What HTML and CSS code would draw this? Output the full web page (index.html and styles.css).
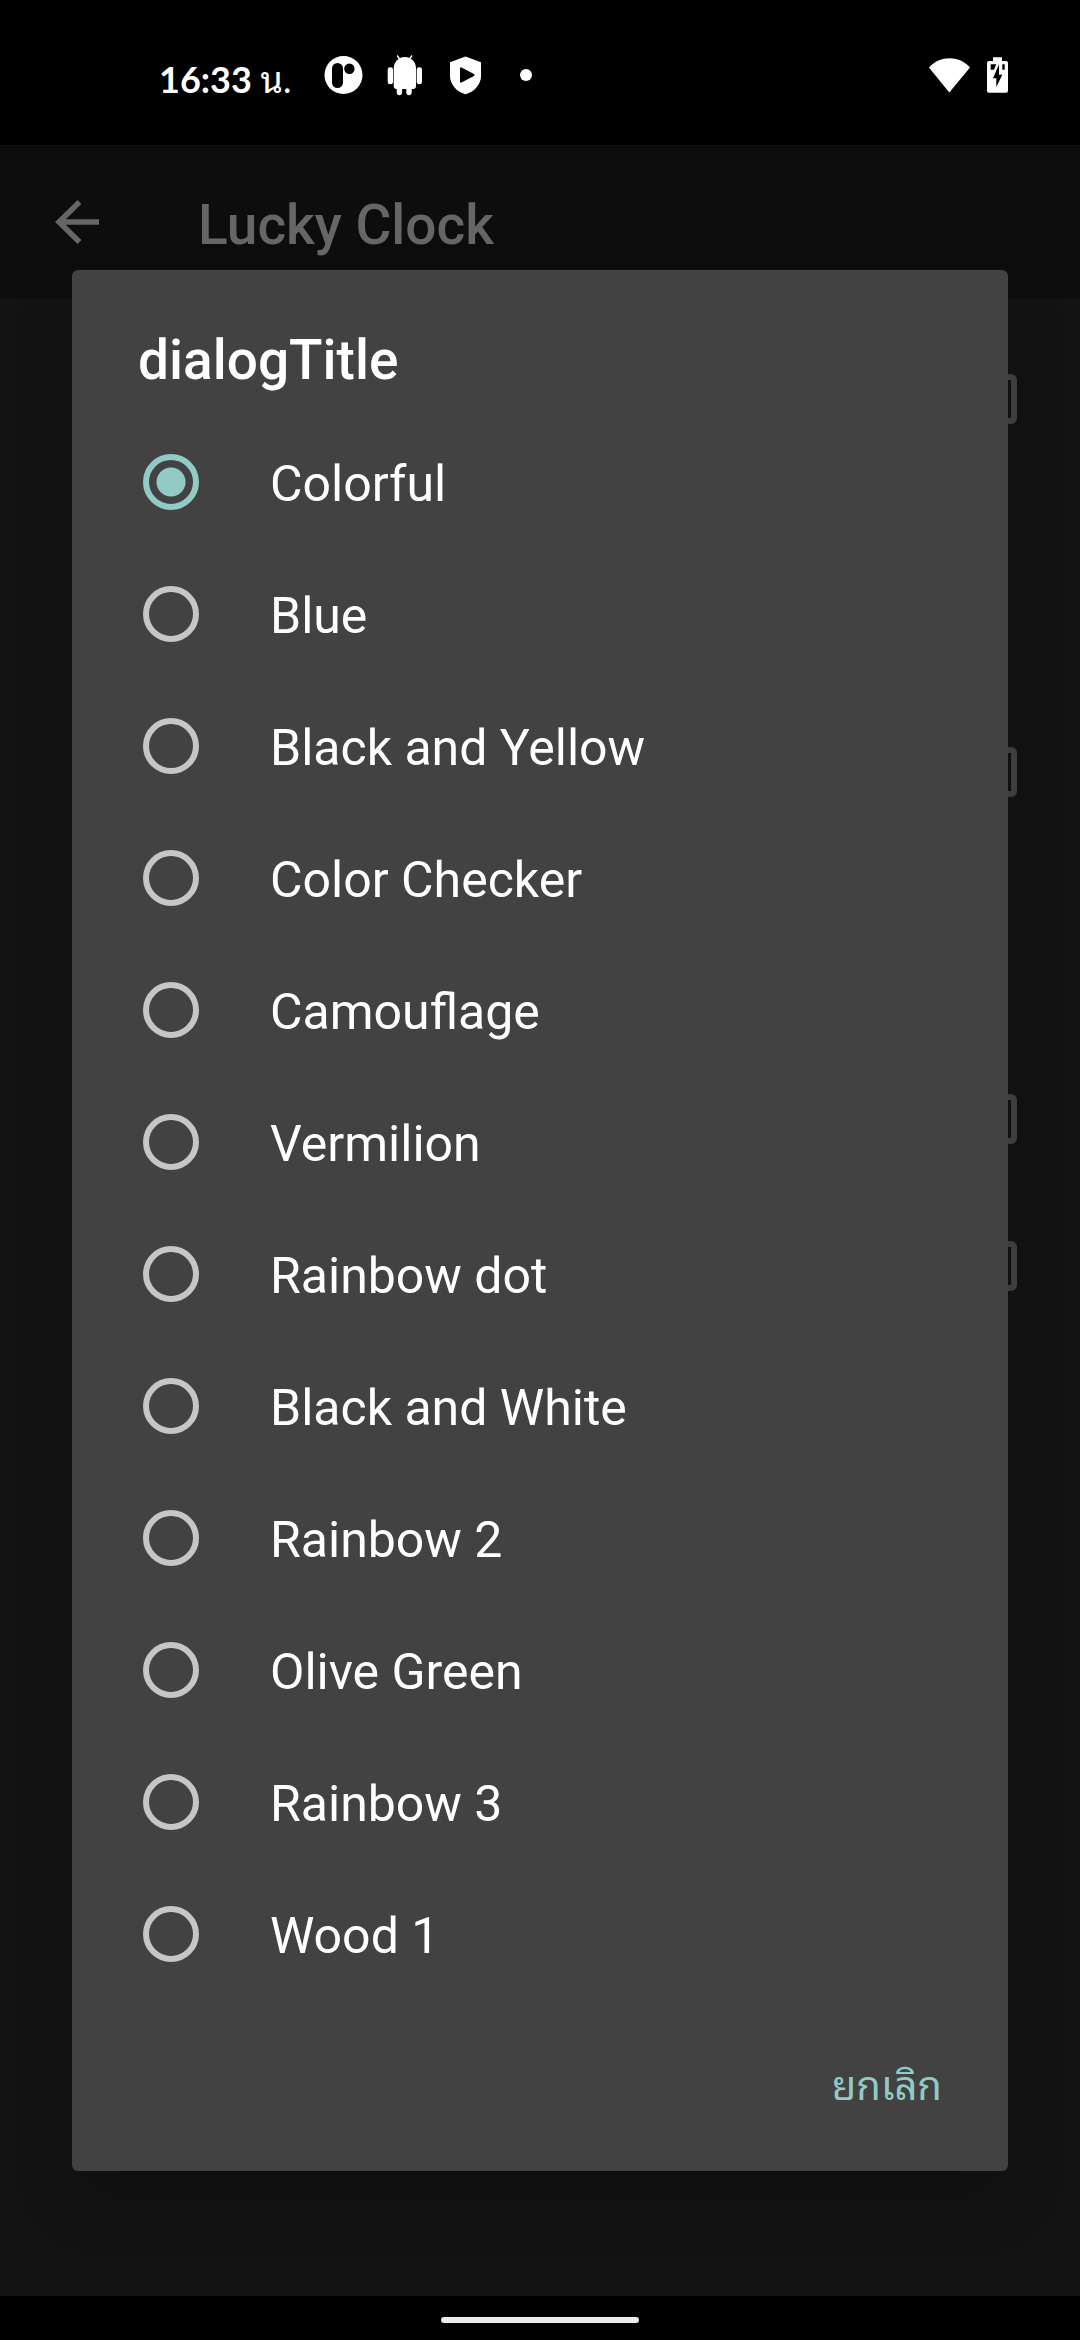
FILE: index.html
```html
<!DOCTYPE html>
<html lang="th">
<head>
    <meta charset="UTF-8">
    <title>Lucky Clock</title>
    <meta name="viewport" content="width=device-width, initial-scale=1.0">
    <link rel="stylesheet" href="styles.css">
</head>
<body>
    <!-- status bar -->
    <div class="status-bar">
        <div class="time">16:33 <span>น.</span></div>
        <div class="notifications">
            <svg class="status-icon" viewBox="0 0 42 42">
                <circle cx="21.5" cy="21" r="19" fill="#fff"/>
                <rect x="10" y="9" width="11" height="25" rx="5.5"/>
                <circle cx="27.4" cy="14.8" r="5.2"/>
            </svg>
            <svg class="status-icon" viewBox="0 0 42 42" fill="#fff">
                <path d="M14.2 1.5l3 4.5M29 1.5l-3 4.5" stroke="#fff" stroke-width="1.4"/>
                <path d="M10.7 14.5a11.1 11.5 0 0 1 22.3 0V32a3 3 0 0 1-3 3H13.7a3 3 0 0 1-3-3z"/>
                <rect x="4.7" y="13.3" width="5.3" height="17" rx="2.4"/>
                <rect x="33.7" y="13.3" width="5.3" height="17" rx="2.4"/>
                <rect x="13.7" y="30" width="5.4" height="11.2" rx="2.4"/>
                <rect x="23.3" y="30" width="5.4" height="11.2" rx="2.4"/>
            </svg>
            <svg class="status-icon" viewBox="0 0 42 42">
                <path d="M21.5 2.6L37 8.2V22c0 8-6 15.500-15.500 18.300C12 37.500 6 30 6 22V8.200z" fill="#fff"/>
                <path d="M17 14.300v13.400L29.500 21z" stroke="#000" stroke-width="2" stroke-linejoin="round"/>
            </svg>
            <svg class="status-icon" viewBox="0 0 42 42">
                <circle cx="21" cy="21" r="6" fill="#fff"/>
            </svg>
        </div>
        <div class="system">
            <svg class="status-icon" viewBox="0 0 42 42">
                <path d="M21.300 38.400L1 13.400C12 1.200 31 1.200 42 13.400z" fill="#fff"/>
            </svg>
            <svg class="battery-icon" viewBox="0 0 21 42">
                <path d="M6 7V3.300h9V7h4a2 2 0 0 1 2 2v27.700a2 2 0 0 1-2 2H2a2 2 0 0 1-2-2V9a2 2 0 0 1 2-2z" fill="#fff"/>
                <path d="M3.700 10.300h5.600L7 15.700H3.700zM15.300 10.300h2.400v5.400h-2.400zM12 10.300v10.400h3.400L9.300 33v-8.700H6z"/>
            </svg>
        </div>
    </div>

    <div class="screen">
        <!-- settings page under the dialog -->
        <div class="page" inert>
            <header class="toolbar">
                <button type="button" class="back-btn">
                    <svg viewBox="0 0 44 44">
                        <path d="M44 22H4M24.500 2L4 22l20.500 20" fill="none" stroke="#666" stroke-width="5.500"/>
                    </svg>
                </button>
                <h1>Lucky Clock</h1>
            </header>
            <div class="settings">
                <label class="setting"><input type="checkbox"></label>
                <div class="setting-wide"></div>
                <label class="setting"><input type="checkbox"></label>
                <div class="setting-plain"></div>
                <label class="setting"><input type="checkbox"></label>
                <label class="setting"><input type="checkbox"></label>
            </div>
        </div>

        <div class="overlay">
            <form class="dialog" role="dialog" aria-labelledby="dialog-title">
                <h2 id="dialog-title">dialogTitle</h2>
                <div class="options">
                    <label class="option"><input type="radio" name="theme" checked><span>Colorful</span></label>
                    <label class="option"><input type="radio" name="theme"><span>Blue</span></label>
                    <label class="option"><input type="radio" name="theme"><span>Black and Yellow</span></label>
                    <label class="option"><input type="radio" name="theme"><span>Color Checker</span></label>
                    <label class="option"><input type="radio" name="theme"><span>Camouflage</span></label>
                    <label class="option"><input type="radio" name="theme"><span>Vermilion</span></label>
                    <label class="option"><input type="radio" name="theme"><span>Rainbow dot</span></label>
                    <label class="option"><input type="radio" name="theme"><span>Black and White</span></label>
                    <label class="option"><input type="radio" name="theme"><span>Rainbow 2</span></label>
                    <label class="option"><input type="radio" name="theme"><span>Olive Green</span></label>
                    <label class="option"><input type="radio" name="theme"><span>Rainbow 3</span></label>
                    <label class="option"><input type="radio" name="theme"><span>Wood 1</span></label>
                </div>
                <div class="actions">
                    <button type="button" class="cancel-btn">ยกเลิก</button>
                </div>
            </form>
        </div>
    </div>

    <div class="nav-bar">
        <div class="nav-pill"></div>
    </div>
</body>
</html>
```
FILE: styles.css
```css
* {
    margin: 0;
    padding: 0;
    box-sizing: border-box;
}

body {
    background: #000;
    color: #fff;
    min-height: 100vh;
    display: flex;
    flex-direction: column;
    font-family: Roboto, "Noto Sans Thai Looped", "Noto Sans Thai", "Noto Sans", sans-serif;
}

/* status bar */
.status-bar {
    height: 145px;
    padding: 5px 72px 0 159px;
    display: flex;
    align-items: center;
}

.time {
    width: 163px;
    padding-top: 4px;
    font-family: Lato, "Noto Sans Thai Looped", "Noto Sans Thai", sans-serif;
    font-size: 36px;
    font-weight: 700;
    white-space: nowrap;
}

.time span {
    font-weight: 400;
}

.notifications {
    display: flex;
    gap: 19px;
}

.system {
    display: flex;
    gap: 17px;
    margin-left: auto;
}

.status-icon {
    width: 42px;
    height: 42px;
}

.battery-icon {
    width: 21px;
    height: 42px;
}

/* page */
.screen {
    position: relative;
    flex: 1;
    display: flex;
    flex-direction: column;
}

.page {
    flex: 1;
    background: #131313;
}

.toolbar {
    height: 154px;
    padding: 0 55px;
    display: flex;
    align-items: center;
    gap: 99px;
    background: #0d0d0d;
}

.back-btn {
    width: 44px;
    height: 44px;
    background: none;
    border: none;
}

.back-btn svg {
    display: block;
}

h1,
h2 {
    font-size: 55px;
    line-height: 64px;
    font-weight: 500;
}

h1 {
    padding-top: 6px;
    color: #666;
}

.settings {
    padding: 26px 63px;
}

.setting {
    height: 147px;
    display: flex;
    align-items: center;
    justify-content: flex-end;
}

.setting-wide {
    height: 226px;
}

.setting-plain {
    height: 200px;
}

.setting input {
    appearance: none;
    width: 50px;
    height: 50px;
    border: 6px solid #444;
    border-radius: 6px;
}

/* dialog */
.overlay {
    position: absolute;
    inset: 0;
    padding: 0 72px;
    display: flex;
    align-items: center;
}

.dialog {
    width: 100%;
    background: #424242;
    border-radius: 6px;
    box-shadow: 0 30px 60px rgba(0, 0, 0, 0.2);
}

h2 {
    padding: 58px 66px 24px;
}

.option {
    height: 132px;
    padding: 0 71px;
    display: flex;
    align-items: center;
    gap: 71px;
    font-size: 50px;
    line-height: 58px;
}

.option span {
    padding-top: 4px;
}

.option input {
    appearance: none;
    width: 56px;
    height: 56px;
    border: 6px solid #c6c6c6;
    border-radius: 50%;
}

.option input:checked {
    border-color: #92cbc5;
    background: radial-gradient(circle, #92cbc5 14px, transparent 15px);
}

.actions {
    height: 171px;
    padding: 2px 66px 0;
    display: flex;
    align-items: center;
    justify-content: flex-end;
}

.cancel-btn {
    background: none;
    border: none;
    color: #92cbc5;
    font-family: inherit;
    font-size: 40px;
    line-height: 58px;
}

/* gesture bar */
.nav-bar {
    height: 44px;
    padding-top: 4px;
    display: flex;
    align-items: center;
    justify-content: center;
}

.nav-pill {
    width: 198px;
    height: 6px;
    border-radius: 3px;
    background: #ebebeb;
}
```
